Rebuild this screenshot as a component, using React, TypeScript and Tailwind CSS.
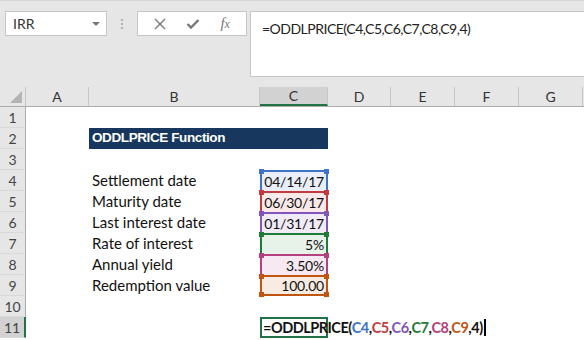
import React from "react"

const cellFont = "font-[Lato,'Liberation_Sans',sans-serif]"

type Ref = {
  label: string
  value: string
  border: string
  bg: string
  dot: string
  last?: boolean
}

const refs: Ref[] = [
  { label: "Settlement date", value: "04/14/17", border: "border-[#3f73c6]", bg: "bg-[#e9eef8]", dot: "bg-[#3f73c6]" },
  { label: "Maturity date", value: "06/30/17", border: "border-[#c43b3f]", bg: "bg-[#f9e9e9]", dot: "bg-[#c43b3f]" },
  { label: "Last interest date", value: "01/31/17", border: "border-[#8056bb]", bg: "bg-[#f0ebf6]", dot: "bg-[#8056bb]" },
  { label: "Rate of interest", value: "5%", border: "border-[#1f7b36]", bg: "bg-[#e7f2e9]", dot: "bg-[#1f7b36]" },
  { label: "Annual yield", value: "3.50%", border: "border-[#b4407e]", bg: "bg-[#f6e9f1]", dot: "bg-[#b4407e]" },
  { label: "Redemption value", value: "100.00", border: "border-[#c0560f]", bg: "bg-[#f8ebe1]", dot: "bg-[#c0560f]", last: true },
]

const RowHead: React.FC<{ n: number; active?: boolean }> = ({ n, active }) => (
  <div
    className={`w-[26px] shrink-0 h-full flex items-center justify-center text-[14px] text-[#444] border-b border-[#d9d9d9] ${
      active ? "bg-[#d2d2d2] border-r-2 border-r-[#217346]" : "bg-[#e6e6e6] border-r border-r-[#ababab]"
    }`}
  >
    {n}
  </div>
)

const Row: React.FC<{ n: number; active?: boolean; children?: React.ReactNode }> = ({ n, active, children }) => (
  <div className="flex h-[21px]">
    <RowHead n={n} active={active} />
    <div className="w-[63px] shrink-0" />
    {children}
  </div>
)

const Handle: React.FC<{ cls: string; pos: string }> = ({ cls, pos }) => (
  <span className={`absolute w-[5px] h-[5px] ${cls} ${pos}`} />
)

export default function App() {
  return (
    <div className={`w-[584px] h-[340px] overflow-hidden bg-white ${cellFont}`}>
      {/* formula bar area */}
      <div className="h-[87px] bg-[#e6e6e6] border-t border-[#d6d6d6] flex items-start pt-[10px] pl-[5px]">
        <div className="w-[102px] h-[25px] bg-white border border-[#c6c6c6] flex items-center justify-between pl-[7px] pr-[6px]">
          <span className="text-[14px] text-[#333]">IRR</span>
          <span className="w-0 h-0 border-l-[4px] border-r-[4px] border-t-[4px] border-l-transparent border-r-transparent border-t-[#777]" />
        </div>
        <div className="w-[30px] h-[25px] flex flex-col items-center justify-center gap-[2px]">
          <span className="w-[2px] h-[2px] bg-[#b0b0b0]" />
          <span className="w-[2px] h-[2px] bg-[#b0b0b0]" />
          <span className="w-[2px] h-[2px] bg-[#b0b0b0]" />
        </div>
        <div className="w-[110px] h-[25px] bg-white border border-[#c6c6c6] flex items-center justify-around px-[6px]">
          <svg width="12" height="12" viewBox="0 0 12 12" stroke="#777" strokeWidth="1.4" fill="none">
            <path d="M1 1 L11 11 M11 1 L1 11" />
          </svg>
          <svg width="14" height="12" viewBox="0 0 14 12" stroke="#777" strokeWidth="2.4" fill="none">
            <path d="M1.5 6 L5 9.5 L12.5 2" />
          </svg>
          <span className="font-['Liberation_Serif',serif] italic text-[#777] text-[15px] leading-none">
            f<span className="text-[12px]">x</span>
          </span>
        </div>
        <div className="ml-[3px] flex-1 h-[66px] bg-white border border-[#c6c6c6] border-r-0 pl-[11px] pt-[4px]">
          <span className="text-[14px] text-[#222] tracking-[-0.5px]">=ODDLPRICE(C4,C5,C6,C7,C8,C9,4)</span>
        </div>
      </div>

      {/* column headers */}
      <div className="flex h-[20px] bg-[#e6e6e6] border-b border-[#ababab] text-[14px] text-[#333]">
        <div className="w-[26px] shrink-0 border-r border-[#c6c6c6] flex items-end justify-end pr-[3px] pb-[3px]">
          <span className="w-0 h-0 border-b-[12px] border-l-[12px] border-b-[#b4b4b4] border-l-transparent" />
        </div>
        <div className="w-[63px] shrink-0 border-r border-[#c6c6c6] flex items-center justify-center">A</div>
        <div className="w-[171px] shrink-0 border-r border-[#c6c6c6] flex items-center justify-center">B</div>
        <div className="w-[68px] shrink-0 bg-[#d2d2d2] border-r border-[#c6c6c6] border-b-2 border-b-[#217346] flex items-center justify-center">
          C
        </div>
        <div className="w-[63px] shrink-0 border-r border-[#c6c6c6] flex items-center justify-center">D</div>
        <div className="w-[64px] shrink-0 border-r border-[#c6c6c6] flex items-center justify-center">E</div>
        <div className="w-[64px] shrink-0 border-r border-[#c6c6c6] flex items-center justify-center">F</div>
        <div className="w-[64px] shrink-0 border-r border-[#c6c6c6] flex items-center justify-center">G</div>
        <div className="flex-1" />
      </div>

      {/* sheet */}
      <div className="text-[15px] text-[#111]">
        <Row n={1} />
        <Row n={2}>
          <div className="w-[239px] h-full bg-[#17375e] text-white font-['Liberation_Sans',sans-serif] font-bold text-[13.5px] tracking-[-0.4px] flex items-center pl-[3px]">
            ODDLPRICE Function
          </div>
        </Row>
        <Row n={3} />
        {refs.map((r, i) => (
          <Row key={r.label} n={i + 4}>
            <div className="w-[171px] shrink-0 flex items-center pl-[3px]">{r.label}</div>
            <div
              className={`relative w-[68px] h-full shrink-0 border-x-2 border-t-2 ${r.last ? "border-b-2" : ""} ${r.border} ${r.bg} flex items-center justify-end pr-[2px] text-[14px] tracking-[-0.2px]`}
            >
              {r.value}
              <Handle cls={r.dot} pos="-left-[3px] -top-[3px]" />
              <Handle cls={r.dot} pos="-right-[3px] -top-[3px]" />
              {r.last && <Handle cls={r.dot} pos="-left-[3px] -bottom-[3px]" />}
              {r.last && <Handle cls={r.dot} pos="-right-[3px] -bottom-[3px]" />}
            </div>
          </Row>
        ))}
        <Row n={10} />
        <Row n={11} active>
          <div className="w-[171px] shrink-0" />
          <div className="relative w-[68px] h-full shrink-0 border-2 border-[#217346]">
            <div className="absolute left-0 top-0 h-full flex items-center pl-[1px] whitespace-nowrap font-bold text-[14.5px] tracking-[-0.5px]">
              <span>=ODDLPRICE(</span>
              <span className="text-[#3f73c6]">C4</span>,<span className="text-[#c43b3f]">C5</span>,
              <span className="text-[#8056bb]">C6</span>,<span className="text-[#1f7b36]">C7</span>,
              <span className="text-[#b4407e]">C8</span>,<span className="text-[#c0560f]">C9</span>,4)
              <span className="ml-[1px] w-[2px] h-[17px] bg-black" />
            </div>
          </div>
        </Row>
      </div>
    </div>
  )
}
